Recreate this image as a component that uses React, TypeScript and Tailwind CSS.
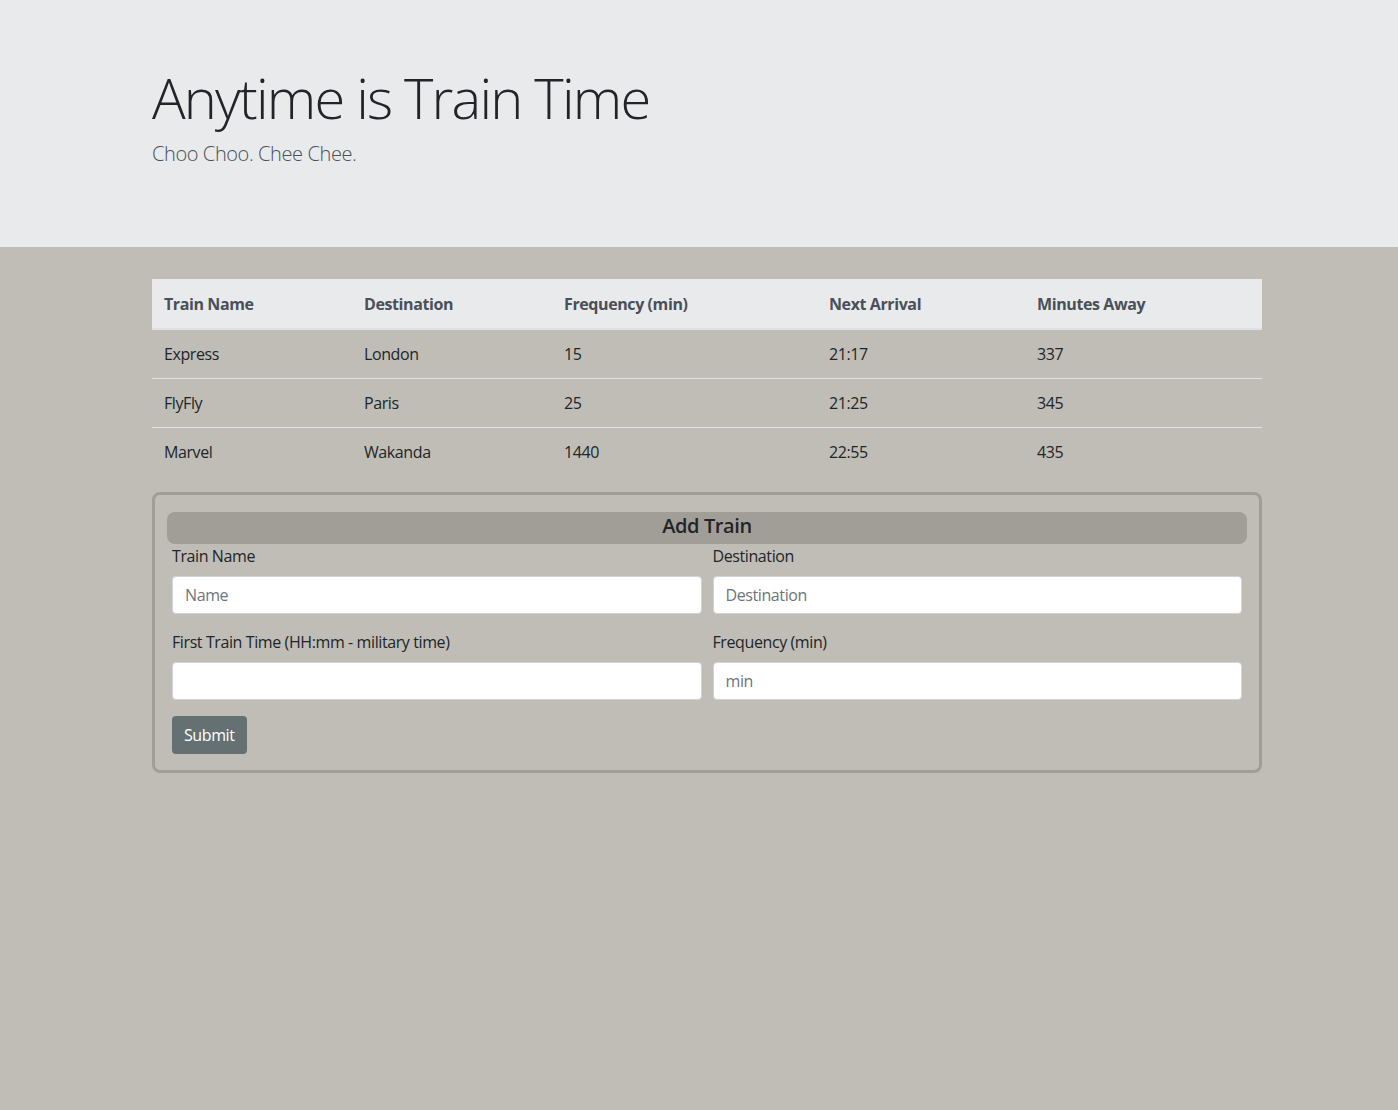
import React from 'react';

const trains = [
  { name: 'Express', destination: 'London', frequency: '15', next: '21:17', away: '337' },
  { name: 'FlyFly', destination: 'Paris', frequency: '25', next: '21:25', away: '345' },
  { name: 'Marvel', destination: 'Wakanda', frequency: '1440', next: '22:55', away: '435' },
];

const Field = ({ label, placeholder = '' }: { label: string; placeholder?: string }) => (
  <div className="flex flex-col">
    <label className="text-base leading-6 mb-2 text-[#212529]">{label}</label>
    <input
      type="text"
      placeholder={placeholder}
      className="h-[38px] w-full rounded bg-white border border-[#ced4da] px-3 text-base text-[#495057] placeholder:text-[#6c757d] outline-none tracking-[-0.4px]"
    />
  </div>
);

export default function App() {
  return (
    <div className="min-h-[1110px] bg-[#c0bdb6] font-['Open_Sans',sans-serif] text-[#212529] tracking-[-0.4px]">
      {/* Jumbotron */}
      <div className="bg-[#e9eaec] h-[247px] mb-8">
        <div className="w-[1110px] ml-[152px] pt-16">
          <h1 className="text-[56px] leading-[67px] font-light mb-2 tracking-[-1.8px] text-[#212529]">Anytime is Train Time</h1>
          <p className="text-xl leading-[30px] font-light text-[#495057] tracking-[-0.4px]">Choo Choo. Chee Chee.</p>
        </div>
      </div>

      <div className="w-[1110px] ml-[152px]">
        {/* Train table */}
        <table className="w-full border-collapse text-base mb-4">
          <thead>
            <tr className="bg-[#e9eaec] text-[#495057]">
              <th className="w-[200px] text-left font-bold px-3 h-[50px] border-b-2 border-[#dee2e6]">Train Name</th>
              <th className="w-[200px] text-left font-bold px-3 border-b-2 border-[#dee2e6]">Destination</th>
              <th className="w-[265px] text-left font-bold px-3 border-b-2 border-[#dee2e6]">Frequency (min)</th>
              <th className="w-[208px] text-left font-bold px-3 border-b-2 border-[#dee2e6]">Next Arrival</th>
              <th className="text-left font-bold px-3 border-b-2 border-[#dee2e6]">Minutes Away</th>
            </tr>
          </thead>
          <tbody>
            {trains.map((t) => (
              <tr key={t.name} className="border-t border-[#dee2e6]">
                <td className="px-3 h-[49px]">{t.name}</td>
                <td className="px-3">{t.destination}</td>
                <td className="px-3">{t.frequency}</td>
                <td className="px-3">{t.next}</td>
                <td className="px-3">{t.away}</td>
              </tr>
            ))}
          </tbody>
        </table>

        {/* Add train form */}
        <div className="border-[3px] border-[#a19e98] rounded-lg px-3 pt-[17px] pb-4">
          <div className="h-8 rounded-lg bg-[#a19e97] flex items-center justify-center pb-[5px] text-xl font-semibold text-[#212529]">
            Add Train
          </div>
          <div className="px-[5px]">
            <div className="grid grid-cols-2 gap-x-[11px] gap-y-4">
              <Field label="Train Name" placeholder="Name" />
              <Field label="Destination" placeholder="Destination" />
              <Field label="First Train Time (HH:mm - military time)" />
              <Field label="Frequency (min)" placeholder="min" />
            </div>
            <button className="mt-4 h-[38px] px-3 rounded bg-[#647071] text-white text-base">Submit</button>
          </div>
        </div>
      </div>
    </div>
  );
}
